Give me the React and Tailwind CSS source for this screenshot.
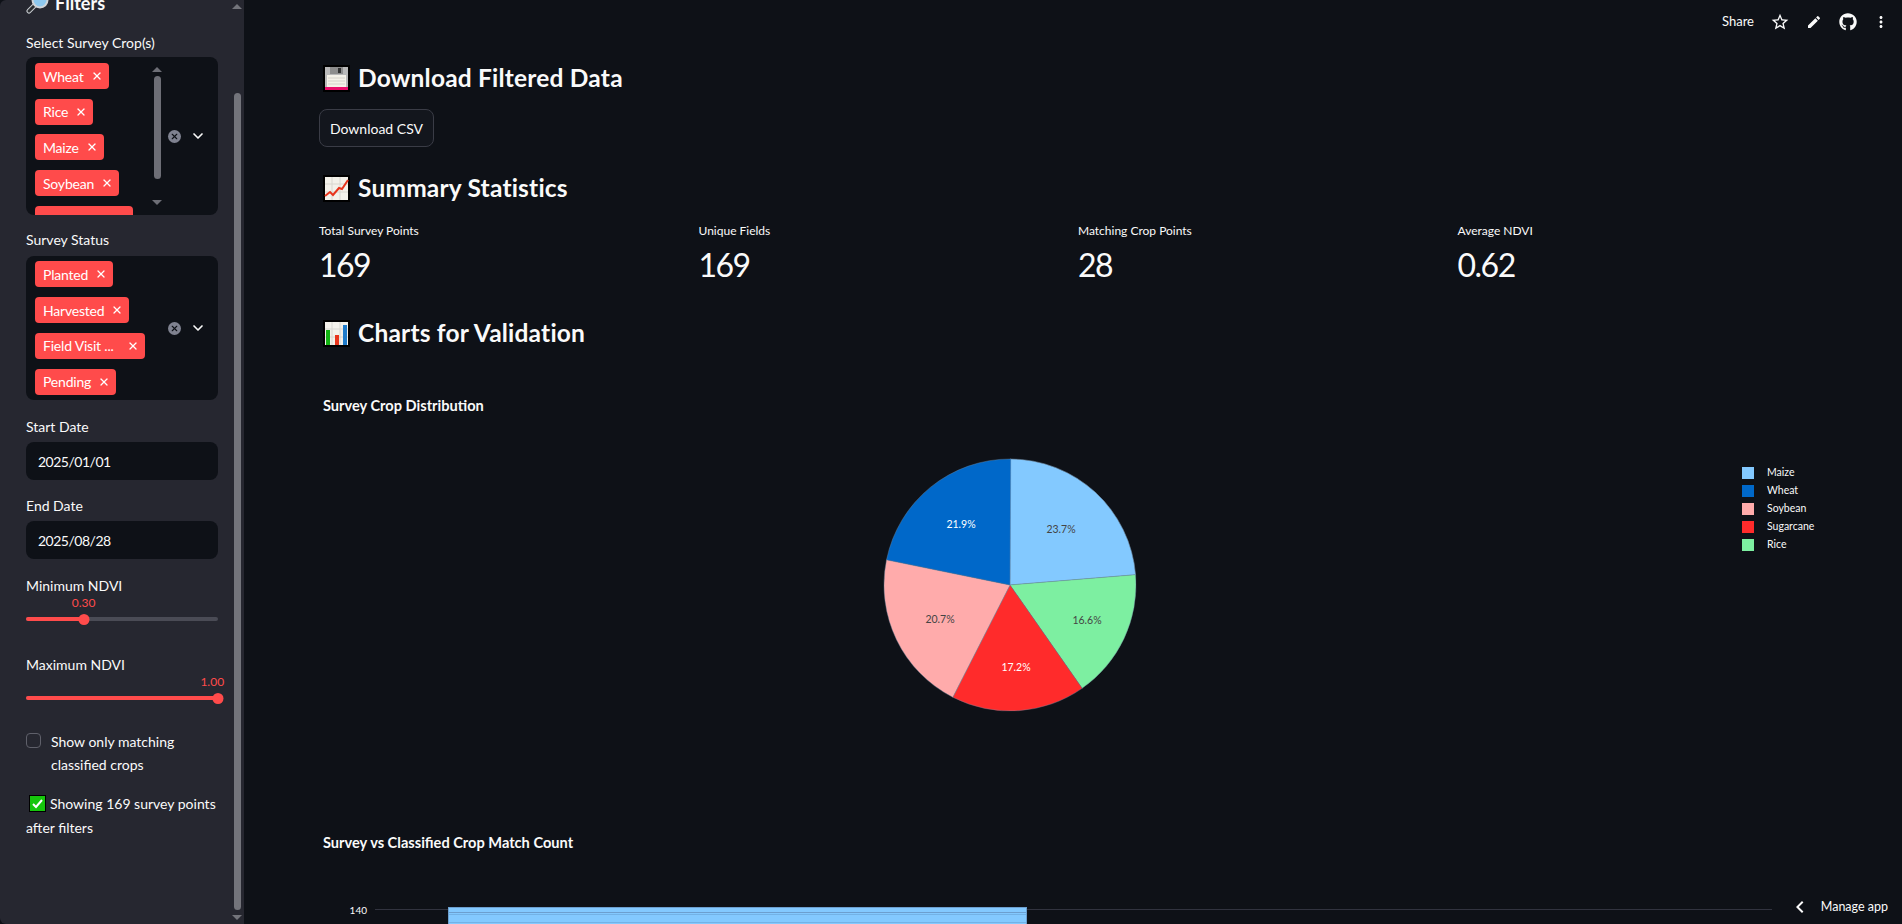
import React from 'react';
import { X, ChevronDown } from 'lucide-react';
import { MdStarBorder, MdEdit, MdMoreVert, MdChevronLeft } from 'react-icons/md';
import { FaGithub } from 'react-icons/fa';

const cropTags = ['Wheat', 'Rice', 'Maize', 'Soybean'];
const statusTags = ['Planted', 'Harvested', 'Field Visit ...', 'Pending'];

const metrics = [
  { label: 'Total Survey Points', value: '169' },
  { label: 'Unique Fields', value: '169' },
  { label: 'Matching Crop Points', value: '28' },
  { label: 'Average NDVI', value: '0.62' },
];

const slices = [
  { name: 'Rice', pct: 16.6, color: '#7defa1', text: '#444444', x: 207, y: 169 },
  { name: 'Sugarcane', pct: 17.2, color: '#ff2b2b', text: '#ffffff', x: 136, y: 216 },
  { name: 'Soybean', pct: 20.7, color: '#ffabab', text: '#444444', x: 60, y: 168 },
  { name: 'Wheat', pct: 21.9, color: '#0068c9', text: '#ffffff', x: 81, y: 73 },
];

const legend = [
  { name: 'Maize', color: '#83c9ff' },
  { name: 'Wheat', color: '#0068c9' },
  { name: 'Soybean', color: '#ffabab' },
  { name: 'Sugarcane', color: '#ff2b2b' },
  { name: 'Rice', color: '#7defa1' },
];

// pie slice path, angles in percent clockwise from the top
const slicePath = (from, to) => {
  const r = 126;
  const c = 130;
  const a0 = (from / 100) * 2 * Math.PI;
  const a1 = (to / 100) * 2 * Math.PI;
  const x0 = c + r * Math.sin(a0);
  const y0 = c - r * Math.cos(a0);
  const x1 = c + r * Math.sin(a1);
  const y1 = c - r * Math.cos(a1);
  const big = to - from > 50 ? 1 : 0;
  return `M${c} ${c}L${x0} ${y0}A${r} ${r} 0 ${big} 1 ${x1} ${y1}Z`;
};

const Tag = ({ label }) => (
  <span className="flex h-[26px] w-fit shrink-0 items-center gap-[7px] rounded-[4px] bg-[#ff4b4b] pl-[8px] pr-[6px] text-[14px] tracking-[-0.2px] text-white">
    <span className={label.endsWith('...') ? 'pr-[6px]' : ''}>{label}</span>
    <X size={12} strokeWidth={2.5} />
  </span>
);

const ClearAndCaret = () => (
  <div className="flex items-center gap-[9px] pl-[5px]">
    <span className="flex h-[13px] w-[13px] items-center justify-center rounded-full bg-[#7f8290]">
      <X size={9} strokeWidth={3} color="#0e1117" />
    </span>
    <ChevronDown size={16} strokeWidth={2.5} color="#fafafa" />
  </div>
);

const Label = ({ children, className = '' }) => (
  <div className={`text-[14px] leading-[16px] text-[#fafafa] ${className}`}>{children}</div>
);

const DateInput = ({ value }) => (
  <div className="flex h-[38px] items-center rounded-[8px] bg-[#0e1117] pl-[12px] text-[14px] tracking-[-0.5px] text-[#fafafa]">{value}</div>
);

const Slider = ({ value, pct, labelPct }) => (
  <div className="relative h-[32px]">
    <span
      className="absolute top-[1px] -translate-x-1/2 text-[12px] leading-[16px] text-[#ff4b4b]"
      style={{ left: `${labelPct}%` }}
    >
      {value}
    </span>
    <div className="absolute inset-x-0 top-[23px] h-[4px] rounded-full bg-[#4a4b55]" />
    <div className="absolute left-0 top-[23px] h-[4px] rounded-full bg-[#ff4b4b]" style={{ width: `${pct}%` }} />
    <div
      className="absolute top-[20px] h-[11px] w-[11px] -translate-x-1/2 rounded-full bg-[#ff4b4b]"
      style={{ left: `${pct}%` }}
    />
  </div>
);

const FloppyEmoji = () => (
  <svg width="27" height="27" viewBox="0 0 27 27" className="shrink-0">
    <rect width="27" height="27" fill="#000" />
    <rect x="2" y="2" width="23" height="23" fill="#b9b9b9" />
    <rect x="7" y="2" width="13" height="7" fill="#8d8d8d" />
    <rect x="15" y="3" width="3" height="5" fill="#333" />
    <rect x="4" y="10" width="19" height="12" fill="#f4f1e8" />
    <path d="M5 13h17M5 16h17M5 19h17" stroke="#d5d2ca" strokeWidth="1" />
    <rect x="2" y="22" width="23" height="3" fill="#ea0e6b" />
  </svg>
);

const LineEmoji = () => (
  <svg width="27" height="27" viewBox="0 0 27 27" className="shrink-0">
    <rect width="27" height="27" fill="#000" />
    <rect x="2" y="2" width="23" height="23" fill="#f3f1ea" />
    <path d="M9 2v23M17 2v23M2 9h23M2 17h23" stroke="#d8d6cf" strokeWidth="1" />
    <path d="M2 21l5-4 3 3 6-7 3 1 6-9" fill="none" stroke="#e8341c" strokeWidth="2" />
  </svg>
);

const BarEmoji = () => (
  <svg width="27" height="27" viewBox="0 0 27 27" className="shrink-0">
    <rect width="27" height="27" fill="#000" />
    <rect x="2" y="2" width="23" height="23" fill="#f3f1ea" />
    <path d="M9 2v23M17 2v23M2 9h23M2 17h23" stroke="#d8d6cf" strokeWidth="1" />
    <rect x="3" y="10" width="4" height="15" fill="#12b312" />
    <rect x="12" y="15" width="4" height="10" fill="#e8341c" />
    <rect x="20" y="5" width="4" height="20" fill="#1f7bc9" />
  </svg>
);

const LensEmoji = () => (
  <svg width="23" height="23" viewBox="0 0 23 23" className="shrink-0">
    <path d="M9 13L3 19" stroke="#c8ccd0" strokeWidth="5" strokeLinecap="round" />
    <path d="M9 13L3 19" stroke="#2c2f33" strokeWidth="3" strokeLinecap="round" />
    <circle cx="14" cy="8" r="7.5" fill="#8ec8ee" stroke="#d0d4d8" strokeWidth="2" />
  </svg>
);

const CheckEmoji = () => (
  <svg width="17" height="17" viewBox="0 0 17 17" className="ml-[3px] mr-[4px] inline-block align-[-3px]">
    <rect width="17" height="17" fill="#000" />
    <rect x="1" y="1" width="15" height="15" fill="#16c60c" />
    <path d="M4 9l3 3 6-7" fill="none" stroke="#fff" strokeWidth="2" />
  </svg>
);

const Heading = ({ icon, children, className = '' }) => (
  <h2 className={`flex items-center gap-[8px] pl-[4px] text-[24.5px] font-bold leading-[32px] tracking-[0.2px] text-[#fafafa] ${className}`}>
    {icon}
    {children}
  </h2>
);

const Sidebar = () => (
  <aside className="relative h-full w-[244px] shrink-0 overflow-hidden rounded-l-[6px] bg-[#262730]">
    <div className="w-[218px] pl-[26px]">
      <div className="-mt-[9px] flex h-[24px] items-center gap-[6px] text-[18px] font-bold text-[#fafafa]">
        <LensEmoji />
        Filters
      </div>
      <Label className="mt-[20px]">Select Survey Crop(s)</Label>
      <div className="mt-[6px] flex h-[158px] w-[192px] items-center overflow-hidden rounded-[8px] bg-[#0e1117] pl-[9px]">
        <div className="flex h-full flex-1 flex-col gap-[9.7px] overflow-hidden pt-[6px]">
          {cropTags.map((t) => (
            <Tag key={t} label={t} />
          ))}
          <span className="h-[26px] w-[98px] shrink-0 rounded-[4px] bg-[#ff4b4b]" />
        </div>
        <div className="mr-[2px] flex h-full w-[8px] flex-col items-center pt-[10px]">
          <span className="h-0 w-0 border-x-[5px] border-b-[5px] border-x-transparent border-b-[#6d6e76]" />
          <span className="mt-[4px] h-[103px] w-[7px] rounded-full bg-[#6d6e76]" />
          <span className="mt-[21px] h-0 w-0 border-x-[5px] border-t-[5px] border-x-transparent border-t-[#6d6e76]" />
        </div>
        <div className="pr-[12px]">
          <ClearAndCaret />
        </div>
      </div>

      <Label className="mt-[17px]">Survey Status</Label>
      <div className="mt-[8px] flex h-[144px] w-[192px] items-center rounded-[8px] bg-[#0e1117] pl-[9px] pr-[12px]">
        <div className="flex flex-1 flex-col gap-[9.7px]">
          {statusTags.map((t) => (
            <Tag key={t} label={t} />
          ))}
        </div>
        <ClearAndCaret />
      </div>

      <Label className="mt-[19px]">Start Date</Label>
      <div className="mt-[7px]">
        <DateInput value="2025/01/01" />
      </div>
      <Label className="mt-[18px]">End Date</Label>
      <div className="mt-[7px]">
        <DateInput value="2025/08/28" />
      </div>

      <Label className="mt-[19px]">Minimum NDVI</Label>
      <Slider value="0.30" pct={30} labelPct={30} />
      <Label className="mt-[31px]">Maximum NDVI</Label>
      <Slider value="1.00" pct={100} labelPct={97} />

      <div className="mt-[25px] flex gap-[10px] text-[14px] leading-[23px] text-[#fafafa]">
        <span className="mt-[3px] h-[15px] w-[15px] shrink-0 rounded-[4px] border border-[#5f606a] bg-[#262730]" />
        <span>
          Show only matching
          <br />
          classified crops
        </span>
      </div>
      <p className="mt-[16px] w-[196px] text-[14px] leading-[24px] text-[#fafafa]">
        <CheckEmoji />
        Showing 169 survey points after filters
      </p>
    </div>

    {/* sidebar scrollbar */}
    <div className="absolute right-[3px] top-[93px] h-[817px] w-[7px] rounded-full bg-[#73747b]" />
    <span className="absolute right-[2px] top-[4px] h-0 w-0 border-x-[5px] border-b-[5px] border-x-transparent border-b-[#73747b]" />
    <span className="absolute bottom-[4px] right-[2px] h-0 w-0 border-x-[5px] border-t-[5px] border-x-transparent border-t-[#73747b]" />
  </aside>
);

const PieChart = () => {
  let start = 23.7;
  return (
    <div className="relative mt-[40px] flex h-[260px] justify-center pr-[121px]">
      <svg width="260" height="260" viewBox="0 0 260 260">
        <path d={slicePath(0, 23.7)} fill="#83c9ff" stroke="#6f8ba5" strokeWidth="0.6" />
        <text x="181" y="78" textAnchor="middle" fontSize="10.5" fill="#444444">
          23.7%
        </text>
        {slices.map((s) => {
          const from = start;
          start += s.pct;
          return (
            <g key={s.name}>
              <path d={slicePath(from, start)} fill={s.color} stroke="#6f8ba5" strokeWidth="0.4" />
              <text x={s.x} y={s.y} textAnchor="middle" fontSize="10.5" fill={s.text}>
                {s.pct}%
              </text>
            </g>
          );
        })}
      </svg>
      <ul className="absolute left-[1423px] top-[9px] flex flex-col">
        {legend.map((l) => (
          <li key={l.name} className="flex h-[18px] items-center gap-[13px] text-[10.5px] text-[#fafafa]">
            <span className="h-[12px] w-[12px]" style={{ backgroundColor: l.color }} />
            {l.name}
          </li>
        ))}
      </ul>
    </div>
  );
};

const BarChart = () => (
  <div className="mt-[49px] flex h-[60px] items-start">
    <span className="mt-[2px] w-[48px] text-right text-[10px] leading-[14px] text-[#fafafa]">140</span>
    <div className="relative ml-[8px] h-[60px] w-[1397px]">
      <div className="absolute inset-x-0 top-[8px] h-px bg-[#31333f]" />
      <div className="absolute left-[73px] top-[6px] h-[54px] w-[579px] border-x border-[#6c9fcf] bg-[#83c9ff]">
        <div className="h-px bg-[#6c9fcf]" />
        <div className="mt-[4px] h-px bg-[#6c9fcf]" />
        <div className="mt-[1px] h-px bg-[#73b2e6]" />
        <div className="mt-[7px] h-px bg-[#73b2e6]" />
      </div>
    </div>
  </div>
);

export default function App() {
  return (
    <div className="relative flex h-[924px] w-[1902px] overflow-hidden bg-[#0e1117] text-[#fafafa] [font-family:Lato,sans-serif]">
      <Sidebar />
      <main className="min-w-0 flex-1 pl-[75px] pr-[81px] pt-[62px]">
        <Heading icon={<FloppyEmoji />}>Download Filtered Data</Heading>
        <button className="mt-[15px] h-[38px] w-[115px] rounded-[8px] border border-[#3a3c46] bg-[#13161d] text-[14px] text-[#fafafa]">
          Download CSV
        </button>
        <Heading icon={<LineEmoji />} className="mt-[25px]">
          Summary Statistics
        </Heading>
        <div className="mt-[19px] grid grid-cols-4 gap-[16px]">
          {metrics.map((m) => (
            <div key={m.label}>
              <div className="text-[12px] leading-[16px] text-[#fafafa]">{m.label}</div>
              <div className="mt-[5px] text-[32px] leading-[42px] tracking-[-1.5px] text-[#fafafa]">{m.value}</div>
            </div>
          ))}
        </div>
        <Heading icon={<BarEmoji />} className="mt-[31px]">
          Charts for Validation
        </Heading>
        <div className="mt-[48px] pl-[4px] text-[14.6px] font-bold leading-[18px] text-[#fafafa]">Survey Crop Distribution</div>
        <PieChart />
        <div className="mt-[119px] pl-[4px] text-[14.6px] font-bold leading-[18px] text-[#fafafa]">
          Survey vs Classified Crop Match Count
        </div>
        <BarChart />
      </main>

      {/* streamlit toolbar */}
      <div className="absolute right-[6px] top-[12px] flex items-center text-[13px] text-[#fafafa]">
        <span className="mr-[9px]">Share</span>
        <span className="flex w-[34px] justify-center"><MdStarBorder size={20} /></span>
        <span className="flex w-[34px] justify-center"><MdEdit size={16} /></span>
        <span className="flex w-[34px] justify-center"><FaGithub size={18} /></span>
        <span className="flex w-[31px] justify-center"><MdMoreVert size={18} /></span>
      </div>
      <div className="absolute bottom-[5px] right-[14px] flex items-center gap-[9px] text-[12.5px] text-[#fafafa]">
        <MdChevronLeft size={24} />
        Manage app
      </div>
    </div>
  );
}
